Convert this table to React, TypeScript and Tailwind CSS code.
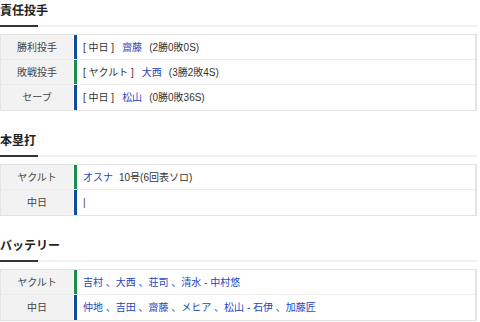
import React from "react"

type Team = "dragons" | "swallows"

const barColor: Record<Team, string> = {
  dragons: "border-[#114c9c]",
  swallows: "border-[#1a8c4c]",
}

function Heading({ title }: { title: string }) {
  return (
    <div>
      <h2 className="h-[25px] text-[12px] font-bold leading-[22px] text-[#222]">{title}</h2>
      <div className="relative h-[2px] bg-[#f0f0f0]">
        <div className="absolute left-0 top-0 h-[2px] w-[38px] bg-[#333]" />
      </div>
    </div>
  )
}

function Row({ label, team, last, children }: { label: string; team: Team; last?: boolean; children: React.ReactNode }) {
  return (
    <div className={`flex h-[25px] ${last ? "" : "border-b border-[#ebebeb]"}`}>
      <div className="flex w-[72px] items-center justify-center bg-[#f2f2f2] text-[10px] text-[#444]">{label}</div>
      <div className={`ml-[1px] flex flex-1 items-center border-l-[3px] pl-[6px] text-[10px] text-[#333] ${barColor[team]}`}>
        {children}
      </div>
    </div>
  )
}

function Table({ children }: { children: React.ReactNode }) {
  return <div className="mt-[7px] border border-r-2 border-[#e3e3e3] bg-white">{children}</div>
}

const Link = ({ children }: { children: React.ReactNode }) => <span className="text-[#2346c0]">{children}</span>

export default function App() {
  return (
    <div
      className="w-[477px] bg-white"
      style={{ fontFamily: '"Liberation Sans", "Noto Sans CJK JP", sans-serif' }}
    >
      <section>
        <Heading title="責任投手" />
        <Table>
          <Row label="勝利投手" team="dragons">
            <span className="whitespace-pre">[ 中日 ]</span>
            <span className="ml-[8px]"><Link>齋藤</Link></span>
            <span className="ml-[7px]">(2勝0敗0S)</span>
          </Row>
          <Row label="敗戦投手" team="swallows">
            <span className="whitespace-pre">[ ヤクルト ]</span>
            <span className="ml-[8px]"><Link>大西</Link></span>
            <span className="ml-[7px]">(3勝2敗4S)</span>
          </Row>
          <Row label="セーブ" team="dragons" last>
            <span className="whitespace-pre">[ 中日 ]</span>
            <span className="ml-[8px]"><Link>松山</Link></span>
            <span className="ml-[7px]">(0勝0敗36S)</span>
          </Row>
        </Table>
      </section>

      <section className="mt-[19px]">
        <Heading title="本塁打" />
        <Table>
          <Row label="ヤクルト" team="swallows">
            <Link>オスナ</Link>
            <span className="ml-[6px]">10号(6回表ソロ)</span>
          </Row>
          <Row label="中日" team="dragons" last>
            <span className="text-[#444]">|</span>
          </Row>
        </Table>
      </section>

      <section className="mt-[19px]">
        <Heading title="バッテリー" />
        <Table>
          <Row label="ヤクルト" team="swallows">
            <span className="whitespace-pre text-[#2346c0]">吉村 、大西 、荘司 、清水 - 中村悠</span>
          </Row>
          <Row label="中日" team="dragons" last>
            <span className="whitespace-pre text-[#2346c0]">仲地 、吉田 、齋藤 、メヒア 、松山 - 石伊 、加藤匠</span>
          </Row>
        </Table>
      </section>
    </div>
  )
}
